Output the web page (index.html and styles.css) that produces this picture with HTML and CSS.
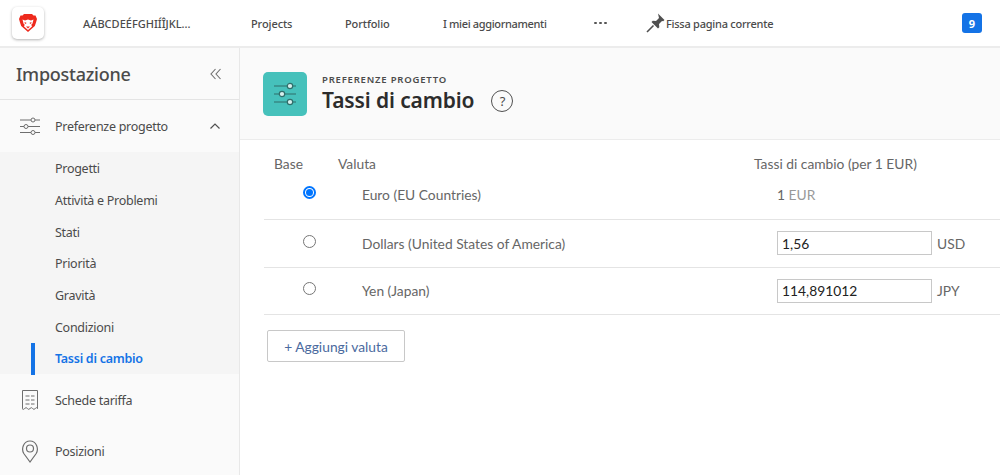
FILE: index.html
```html
<!DOCTYPE html>
<html lang="it">
<head>
    <meta charset="UTF-8">
    <title>Tassi di cambio</title>
    <link rel="stylesheet" href="styles.css">
</head>
<body>
    <header class="topbar">
        <div class="logo">
            <svg width="18" height="18" viewBox="0 0 18 18"><path d="M5 0h8l1.500 1.500 2 .0L18 5l-1 3.500-1.200 3.500L9 18l-6.800-6L1 8.500 0 5l1.500-3.500h2z" fill="#ee2a1d"/><path d="M3.500 5.500L6 6.500 9 5.500l3 1 2.500-1-1 4-1.200 1.200.7 1.800L9 16l-4-3.500.7-1.800L4.500 9.500z" fill="#fff"/><path d="M5.500 8l2.300 1-1.800 1zM12.500 8l-2.300 1 1.800 1zM7 12.500h4L9 14.500z" fill="#ee2a1d"/></svg>
        </div>
        <span class="brand">AÁBCDEÉFGHIÍÎJKL...</span>
        <nav class="topnav">
            <a class="nav-projects">Projects</a>
            <a class="nav-portfolio">Portfolio</a>
            <a class="nav-updates">I miei aggiornamenti</a>
            <span class="dots"><i></i><i></i><i></i></span>
            <a class="pin">
                <svg width="20" height="20" viewBox="0 0 20 20"><path d="M12 .5l6.500 6.500-1.300 1.300-1.200-.3-3 3 .3 3.200-1.300 1.300-6.500-6.500 1.300-1.300 3.200.3 3-3-.3-1.200z" fill="#505050"/><path d="M7.500 12.500L1 19" stroke="#505050" stroke-width="1.600" fill="none"/></svg>
                Fissa pagina corrente
            </a>
        </nav>
        <span class="badge">9</span>
    </header>

    <div class="layout">
        <aside class="sidebar">
            <div class="side-head">
                <h2>Impostazione</h2>
                <svg width="12" height="12" viewBox="0 0 12 12" fill="none" stroke="#6e6e6e" stroke-width="1.100"><path d="M5.500 1L1 6l4.500 5M10.500 1L6 6l4.500 5"/></svg>
            </div>
            <div class="side-item side-open">
                <svg class="side-icon" width="20" height="18" viewBox="0 0 20 18" fill="none" stroke="#6e6e6e"><path d="M0 3h11M15 3h5M0 9.500h4M8 9.500h12M0 15.500h11M15 15.500h5"/><circle cx="13" cy="3" r="2"/><circle cx="6" cy="9.500" r="2"/><circle cx="13" cy="15.500" r="2"/></svg>
                <span>Preferenze progetto</span>
                <svg class="chevron" width="10" height="6" viewBox="0 0 10 6" fill="none" stroke="#505050" stroke-width="1.200"><path d="M.5 5.500L5 1l4.500 4.500"/></svg>
            </div>
            <ul class="sub-list">
                <li>Progetti</li>
                <li>Attività e Problemi</li>
                <li>Stati</li>
                <li>Priorità</li>
                <li>Gravità</li>
                <li>Condizioni</li>
                <li class="active">Tassi di cambio</li>
            </ul>
            <div class="side-item side-rates">
                <svg class="side-icon" width="20" height="21" viewBox="0 0 20 21" fill="none" stroke="#6e6e6e"><path d="M2.500 18.500V.5h15v18"/><path d="M2 18.500q1.300 1.800 2.700 0t2.700 0 2.600 0 2.600 0 2.700 0 2.700 0"/><path d="M5.500 6h4M11 6h3.500M5.500 10h4M11 10h3.500M5.500 14h4M11 14h3.500"/></svg>
                <span>Schede tariffa</span>
            </div>
            <div class="side-item side-places">
                <svg class="side-icon" width="20" height="23" viewBox="0 0 20 23" fill="none" stroke="#6e6e6e" stroke-width="1.200"><path d="M10 22L3.800 13.500C1 9 3.500 1 10 1s9 8 6.200 12.500z"/><circle cx="10" cy="8.500" r="3.500"/></svg>
                <span>Posizioni</span>
            </div>
        </aside>

        <main class="content">
            <div class="page-head">
                <div class="page-icon">
                    <svg width="26" height="26" viewBox="0 0 26 26" fill="none" stroke="#2f6f6b" stroke-width="1.200"><path d="M2 5h13M21 5h3M2 13h5M13 13h11M2 21h13M21 21h3"/><circle cx="18" cy="5" r="2.700" fill="#d8f0ee"/><circle cx="10" cy="13" r="2.700" fill="#d8f0ee"/><circle cx="18" cy="21" r="2.700" fill="#d8f0ee"/></svg>
                </div>
                <div class="page-title">
                    <div class="eyebrow">PREFERENZE PROGETTO</div>
                    <h1>Tassi di cambio</h1>
                </div>
                <span class="help">?</span>
            </div>

            <div class="rates">
                <div class="rates-head">
                    <span class="col-base">Base</span>
                    <span class="col-cur">Valuta</span>
                    <span class="col-rate">Tassi di cambio (per 1 EUR)</span>
                </div>
                <div class="rate-row row-first">
                    <span class="radio checked"></span>
                    <span class="cur-name">Euro (EU Countries)</span>
                    <span class="fixed"><b>1</b> EUR</span>
                </div>
                <div class="rate-row">
                    <span class="radio"></span>
                    <span class="cur-name">Dollars (United States of America)</span>
                    <input class="rate-input" type="text" value="1,56">
                    <span class="code">USD</span>
                </div>
                <div class="rate-row">
                    <span class="radio"></span>
                    <span class="cur-name">Yen (Japan)</span>
                    <input class="rate-input" type="text" value="114,891012">
                    <span class="code">JPY</span>
                </div>
                <button class="add-btn">+ Aggiungi valuta</button>
            </div>
        </main>
    </div>
</body>
</html>
```

FILE: styles.css
```css
* {
    box-sizing: border-box;
}
html, body {
    margin: 0;
    height: 475px;
    overflow: hidden;
}
body {
    font-family: "Noto Sans", sans-serif;
    background-color: #fff;
    color: #4b4b4b;
}
.topbar {
    height: 48px;
    display: flex;
    align-items: center;
    border-bottom: 2px solid #ececec;
    padding: 0 18px 0 12px;
}
.logo {
    width: 32px;
    height: 32px;
    border-radius: 5px;
    background-color: #fff;
    box-shadow: 0 1px 3px rgba(0, 0, 0, 0.3);
    display: flex;
    align-items: center;
    justify-content: center;
}
.brand {
    margin-left: 39px;
    width: 168px;
    font-size: 11px;
    font-weight: 500;
    white-space: nowrap;
}
.topnav {
    display: flex;
    align-items: center;
    font-size: 11px;
    font-weight: 500;
    letter-spacing: -0.1px;
    flex: 1;
}
.nav-projects {
    width: 94px;
}
.nav-portfolio {
    width: 98px;
}
.nav-updates {
    width: 151px;
    letter-spacing: -0.35px;
}
.dots {
    display: flex;
    gap: 2.500px;
    width: 52px;
}
.dots i {
    width: 2.500px;
    height: 2.500px;
    border-radius: 50%;
    background-color: #555;
}
.pin {
    display: flex;
    align-items: center;
    letter-spacing: -0.25px;
}
.badge {
    width: 20px;
    height: 20px;
    border-radius: 3px;
    background-color: #1473e6;
    color: #fff;
    font-size: 11px;
    font-weight: 700;
    display: flex;
    align-items: center;
    justify-content: center;
}
.layout {
    display: flex;
    height: 427px;
}
.sidebar {
    width: 240px;
    flex-shrink: 0;
    background-color: #fafafa;
    border-right: 1px solid #e8e8e8;
}
.side-head {
    height: 52px;
    padding: 0 17px 0 16px;
    display: flex;
    align-items: center;
    justify-content: space-between;
    border-bottom: 1px solid #e4e4e4;
}
.side-head h2 {
    margin: 0;
    font-size: 18px;
    font-weight: 500;
    letter-spacing: -0.25px;
    color: #4b4b4b;
}
.side-item {
    display: flex;
    align-items: center;
    padding-left: 20px;
    font-size: 12.500px;
    letter-spacing: -0.28px;
}
.side-icon {
    width: 20px;
    margin-right: 15px;
    flex-shrink: 0;
}
.side-open {
    height: 52px;
}
.chevron {
    margin-left: auto;
    margin-right: 19px;
}
.sub-list {
    list-style: none;
    margin: 0;
    padding: 1px 0 0;
    background-color: #f5f5f5;
    height: 222px;
}
.sub-list li {
    height: 31.700px;
    padding-left: 55px;
    font-size: 12.500px;
    letter-spacing: -0.28px;
    display: flex;
    align-items: center;
}
.sub-list .active {
    color: #1473e6;
    font-weight: 600;
    position: relative;
}
.sub-list .active::before {
    content: "";
    position: absolute;
    left: 31px;
    top: 0;
    bottom: 0;
    width: 4px;
    background-color: #1473e6;
}
.side-rates {
    height: 52px;
}
.side-places {
    height: 50px;
}
.content {
    flex: 1;
}
.page-head {
    height: 92px;
    background-color: #fafafa;
    border-bottom: 1px solid #ececec;
    display: flex;
    align-items: center;
    padding-left: 23px;
}
.page-icon {
    width: 44px;
    height: 44px;
    border-radius: 5px;
    background-color: #46c1bb;
    display: flex;
    align-items: center;
    justify-content: center;
    margin-right: 15px;
}
.page-title {
    padding-top: 1px;
}
.eyebrow {
    font-size: 9.500px;
    font-weight: 600;
    letter-spacing: 0.8px;
    line-height: 12px;
    color: #4b4b4b;
}
.page-head h1 {
    margin: 0;
    font-size: 21px;
    font-weight: 600;
    letter-spacing: -0.12px;
    line-height: 28px;
    color: #2c2c2c;
}
.help {
    width: 22px;
    height: 22px;
    border: 1px solid #505050;
    border-radius: 50%;
    margin-left: 17px;
    margin-top: 15px;
    font-size: 13px;
    display: flex;
    align-items: center;
    justify-content: center;
}
.rates {
    font-family: Lato, sans-serif;
    font-size: 13.800px;
    color: #666;
    padding: 0 0 0 24px;
}
.rates-head {
    display: flex;
    height: 40px;
    padding-top: 17px;
    line-height: 14px;
}
.col-base {
    margin-left: 10px;
    width: 64px;
}
.col-cur {
    width: 416px;
}
.rate-row {
    display: flex;
    align-items: center;
    height: 47.500px;
    border-bottom: 1px solid #e4e4e4;
}
.row-first {
    height: 40px;
    padding-bottom: 10px;
}
.radio {
    width: 13px;
    height: 13px;
    border: 1px solid #767676;
    border-radius: 50%;
    margin-left: 39px;
    margin-top: -4px;
    background-color: #fff;
}
.radio.checked {
    border: 2px solid #0075ff;
    padding: 1px;
    background-clip: content-box;
    background-color: #0075ff;
}
.cur-name {
    margin-left: 46px;
    width: 415px;
}
.fixed {
    color: #999;
}
.fixed b {
    font-weight: 400;
    color: #666;
}
.rate-input {
    width: 155px;
    height: 24px;
    border: 1px solid #c8c8c8;
    padding: 0 4px;
    font: 13.800px Lato, sans-serif;
    color: #222;
    margin-right: 5px;
    background-color: #fff;
    outline: none;
}
.add-btn {
    display: block;
    margin: 15px 0 0 3px;
    width: 138px;
    height: 32px;
    background-color: #fff;
    border: 1px solid #c8c8c8;
    border-radius: 2px;
    font: 13.800px Lato, sans-serif;
    color: #4b6a9e;
    padding: 0;
}
```
